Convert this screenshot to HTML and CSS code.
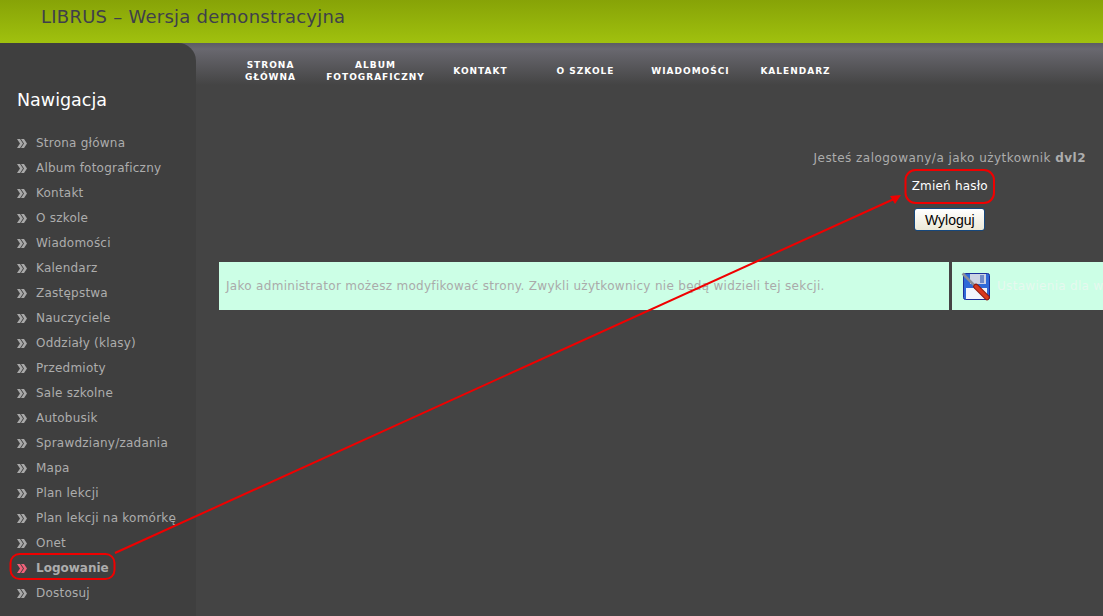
FILE: index.html
```html
<!DOCTYPE html>
<html lang="pl">
<head>
  <meta charset="UTF-8" />
  <title>LIBRUS - Wersja demonstracyjna</title>
  <link rel="stylesheet" href="styles.css">
</head>
<body>
  <header class="top">LIBRUS – Wersja demonstracyjna</header>

  <div class="page">
    <aside class="side">
      <h2>Nawigacja</h2>
      <ul class="side-menu">
        <li>Strona główna</li>
        <li>Album fotograficzny</li>
        <li>Kontakt</li>
        <li>O szkole</li>
        <li>Wiadomości</li>
        <li>Kalendarz</li>
        <li>Zastępstwa</li>
        <li>Nauczyciele</li>
        <li>Oddziały (klasy)</li>
        <li>Przedmioty</li>
        <li>Sale szkolne</li>
        <li>Autobusik</li>
        <li>Sprawdziany/zadania</li>
        <li>Mapa</li>
        <li>Plan lekcji</li>
        <li>Plan lekcji na komórkę</li>
        <li>Onet</li>
        <li class="active">Logowanie</li>
        <li>Dostosuj</li>
      </ul>
    </aside>

    <main class="main">
      <nav class="tabs">
        <a>STRONA<br>GŁÓWNA</a>
        <a>ALBUM<br>FOTOGRAFICZNY</a>
        <a>KONTAKT</a>
        <a>O SZKOLE</a>
        <a>WIADOMOŚCI</a>
        <a>KALENDARZ</a>
      </nav>

      <div class="login">
        <p>Jesteś zalogowany/a jako użytkownik <b>dvl2</b></p>
        <a class="change">Zmień hasło</a>
        <button>Wyloguj</button>
      </div>

      <div class="admin">
        <div class="admin-note">Jako administrator możesz modyfikować strony. Zwykli użytkownicy nie będą widzieli tej sekcji.</div>
        <div class="admin-tool">
          <svg width="30" height="29" viewBox="0 0 30 29">
            <rect x="2.500" y="1.500" width="26" height="26" rx="2" fill="#2f6ad8" stroke="#1c2f9a"/>
            <rect x="9" y="2" width="16" height="10" fill="#ccd3e4"/>
            <rect x="19" y="3" width="4" height="8" fill="#6f8ac8"/>
            <rect x="5" y="16" width="21" height="11" fill="#f2f5fc"/>
            <path d="M1.500 1.500L14 14" stroke="#8b8e98" stroke-width="2.500"/>
            <path d="M15 14.500L26 25.500" stroke="#8c1a10" stroke-width="5.500" stroke-linecap="round"/>
            <path d="M15 14.500L26 25.500" stroke="#d9381f" stroke-width="3.500" stroke-linecap="round"/>
          </svg>
          <span>Ustawienia dla wszystkich stron</span>
        </div>
      </div>
    </main>
  </div>

  <!-- red annotations drawn over the screenshot -->
  <svg class="marks" width="1103" height="616" viewBox="0 0 1103 616">
    <rect x="10.500" y="554" width="104" height="25" rx="9" fill="none" stroke="#f00000" stroke-width="2"/>
    <rect x="905.500" y="170" width="88.500" height="33" rx="10" fill="none" stroke="#f00000" stroke-width="2"/>
    <path d="M115 553L894 199" fill="none" stroke="#f00000" stroke-width="2"/>
    <path d="M901 195L890 196L895 204z" fill="#f00000"/>
  </svg>
</body>
</html>
```
FILE: styles.css
```css
* {
  box-sizing: border-box;
}

html, body {
  height: 100%;
}

body {
  margin: 0;
  overflow: hidden;
  background: #444;
  font-family: "DejaVu Sans", Verdana, sans-serif;
  font-size: 12px;
  color: #adadad;
}

.top {
  height: 43px;
  padding: 6px 0 0 41px;
  background: linear-gradient(#87a307, #a0c10e);
  font-size: 18px;
  line-height: 21px;
  letter-spacing: 0.25px;
  color: #3f3f4b;
}

.page {
  display: flex;
  height: 573px;
  background: linear-gradient(#5c5c64, #69686f 6px, #444 42px);
}

.side {
  width: 196px;
  flex: none;
  padding: 46px 0 0 17px;
  background: #3f3f3f;
  border-top-right-radius: 18px;
}

.side h2 {
  margin: 0 0 20px;
  font-size: 17.500px;
  font-weight: normal;
  line-height: 22px;
  color: #fff;
}

.side-menu {
  margin: 0;
  padding: 0;
  list-style: none;
}

.side-menu li {
  height: 25px;
  padding-left: 19px;
  line-height: 25px;
  letter-spacing: 0.23px;
  position: relative;
}

.side-menu li::before {
  content: "";
  position: absolute;
  left: 0;
  top: 8px;
  width: 10px;
  height: 9px;
  background: #a9a9a9;
  clip-path: path("M0 0h3l3 4.500-3 4.500H0l3-4.500z M4 0h3l3 4.500-3 4.500H4l3-4.500z");
}

.side-menu .active {
  font-weight: bold;
  letter-spacing: 0;
}

.side-menu .active::before {
  background: #f0627a;
}

.main {
  flex: 1;
  min-width: 0;
}

.tabs {
  display: flex;
  height: 42px;
  padding: 16px 0 0 22px;
}

.tabs a {
  display: flex;
  align-items: center;
  justify-content: center;
  width: 105px;
  height: 24px;
  text-align: center;
  font-size: 9px;
  font-weight: bold;
  line-height: 12px;
  letter-spacing: 1px;
  color: #fff;
}

.login {
  display: flex;
  flex-direction: column;
  align-items: center;
  width: fit-content;
  margin: 65px 17px 0 auto;
}

.login p {
  margin: 0;
  line-height: 16px;
  letter-spacing: 0.46px;
}

.change {
  margin-top: 12px;
  line-height: 16px;
  letter-spacing: 0.2px;
  color: #fff;
}

.login button {
  width: 71px;
  height: 23px;
  margin-top: 14px;
  padding: 0;
  background: linear-gradient(#fff, #ece9d8);
  border: 1px solid #16477c;
  border-radius: 3px;
  font-family: "Liberation Sans", Arial, sans-serif;
  font-size: 14px;
  color: #000;
}

.admin {
  display: flex;
  height: 48px;
  margin: 31px 0 0 23px;
  background: #ccffe6;
  white-space: nowrap;
  overflow: hidden;
}

.admin-note {
  width: 733px;
  flex: none;
  padding-left: 7px;
  line-height: 48px;
  letter-spacing: 0.3px;
  color: #aaa;
  border-right: 3px solid #444;
}

.admin-tool {
  display: flex;
  align-items: center;
  gap: 6px;
  padding-left: 9px;
  letter-spacing: 0.3px;
  color: #e6f9ef;
}

.marks {
  position: absolute;
  top: 0;
  left: 0;
}
```
